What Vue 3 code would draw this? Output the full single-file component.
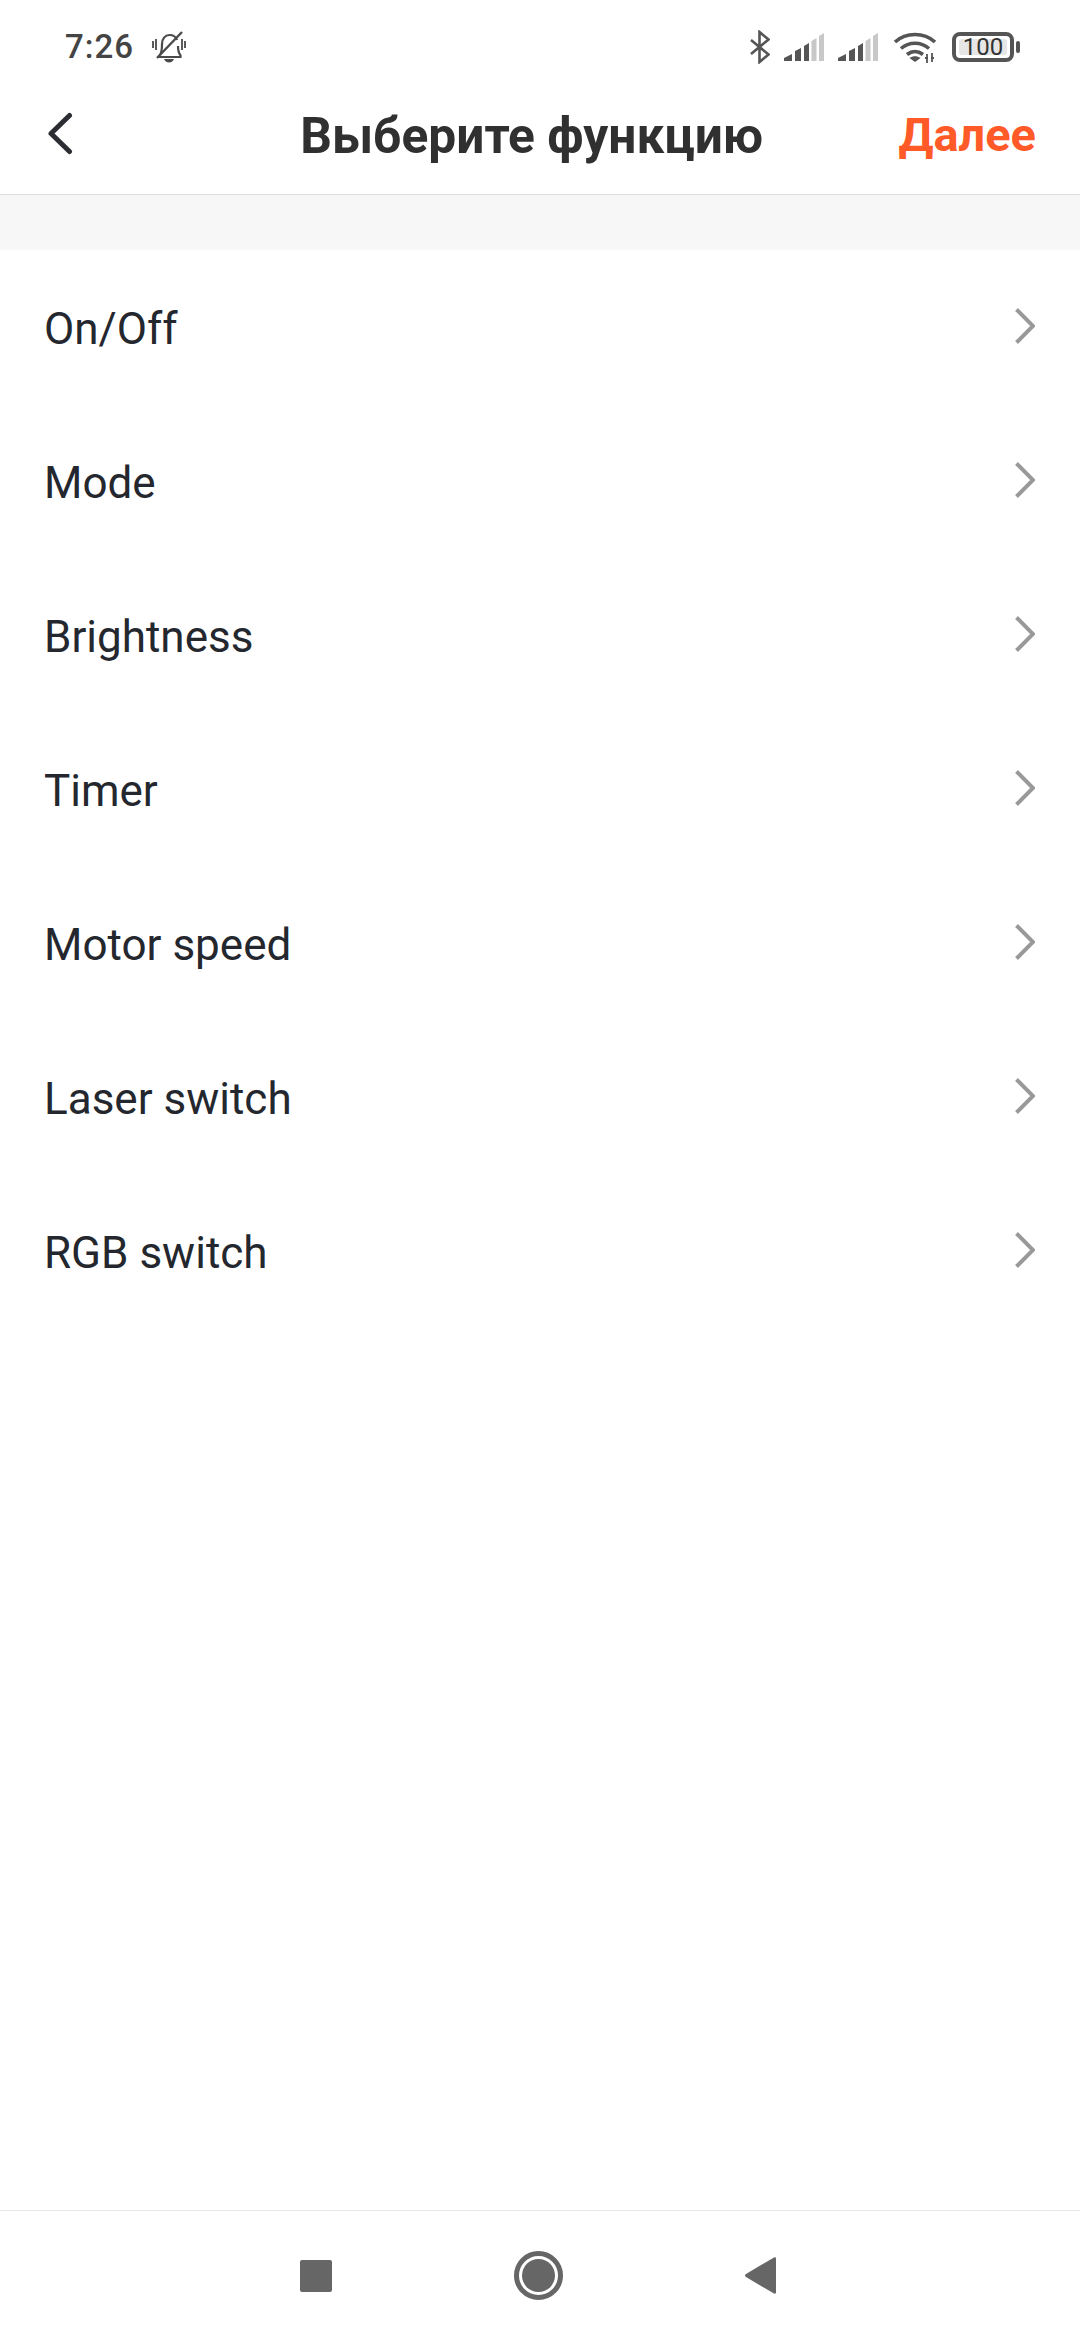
<template>
  <div class="page">
    <div class="status-bar">
      <div class="status-left">
        <span class="time">7:26</span>
        <svg class="bell" width="36" height="34" viewBox="0 0 36 34">
          <path d="M9 25c2-3 2-6 2-11 0-5 3-9 7.500-9 4 0 6.500 2 7.500 5M27 16c0 4 .5 7 2.500 9.500V27H8" fill="none" stroke="#4a4a4a" stroke-width="2.200" />
          <path d="M6 28 31 2" fill="none" stroke="#4a4a4a" stroke-width="2.400" />
          <path d="M13 29h10c-1 2.500-3 3.500-5 3.500s-4-1-5-3.500z" fill="#4a4a4a" />
          <path d="M2 11v7M5 9v11M31 9v11M34 11v7" fill="none" stroke="#4a4a4a" stroke-width="1.800" />
        </svg>
      </div>
      <div class="status-right">
        <svg class="bluetooth" width="22" height="34" viewBox="0 0 22 34">
          <path d="M3 10 20.500 24.500 11.500 32V2l9 7.500L3 24" fill="none" stroke="#555" stroke-width="2.600" />
        </svg>
        <svg v-for="n in 2" :key="n" class="signal" width="40" height="30" viewBox="0 0 40 30">
          <path d="M0 29v-3l8-4v7zM11 29V19l6-3v13zM20 29V14l5-3v18z" fill="#555" />
          <path d="M27.500 29V9l5-3v23zM35 29V4l5-3v28z" fill="#c8c8c8" />
        </svg>
        <svg class="wifi" width="44" height="32" viewBox="0 0 44 32">
          <path d="M2 11c11-10 29-10 40 0M8 17.500c8-7 20-7 28 0M14 23.500c5-4 11-4 16 0" fill="none" stroke="#555" stroke-width="3.600" />
          <path d="M16.500 27c3.500-2.500 7.500-2.500 11 0l-5.500 4z" fill="#555" />
          <path d="M34 23v9M39 22v9M32 27h3M38 27h3" fill="none" stroke="#555" stroke-width="1.800" />
        </svg>
        <div class="battery">
          <div class="battery-body"><span class="battery-level">100</span></div>
          <div class="battery-nub"></div>
        </div>
      </div>
    </div>

    <div class="header">
      <svg class="back" width="26" height="44" viewBox="0 0 26 44">
        <path d="M22.500 4.500 4 22.500l18.500 18" fill="none" stroke="#2b2d33" stroke-width="5" stroke-linecap="round" stroke-linejoin="round" />
      </svg>
      <div class="title">Выберите функцию</div>
      <div class="next">Далее</div>
    </div>

    <div class="band"></div>

    <div class="list">
      <div v-for="item in items" :key="item" class="row">
        <span class="label">{{ item }}</span>
        <svg class="chevron" width="22" height="38" viewBox="0 0 22 38">
          <path d="M3.500 2.500 20 19 3.500 35.500" fill="none" stroke="#999" stroke-width="4" />
        </svg>
      </div>
    </div>

    <div class="nav">
      <svg width="32" height="32" viewBox="0 0 32 32"><rect width="32" height="32" rx="2" fill="#666" /></svg>
      <svg width="49" height="49" viewBox="0 0 49 49">
        <circle cx="24.500" cy="24.500" r="22" fill="none" stroke="#666" stroke-width="5" />
        <circle cx="24.500" cy="24.500" r="16.500" fill="#666" />
      </svg>
      <svg width="31" height="37" viewBox="0 0 31 37"><path d="M29 .4c1-.5 2 0 2 1v34.200c0 1-1 1.500-2 1L1 20c-1.300-.8-1.300-2.200 0-3z" fill="#666" /></svg>
    </div>
  </div>
</template>

<script setup>
const items = [
  'On/Off',
  'Mode',
  'Brightness',
  'Timer',
  'Motor speed',
  'Laser switch',
  'RGB switch'
];
</script>

<style>
html,
body {
  margin: 0;
  background: #fff;
}
</style>

<style scoped>
.page {
  width: 1080px;
  height: 2340px;
  display: flex;
  flex-direction: column;
  background: #fff;
  font-family: Roboto, sans-serif;
}

.status-bar {
  height: 64px;
  padding: 29px 60px 0 65px;
  box-sizing: border-box;
  display: flex;
  justify-content: space-between;
  align-items: center;
  flex-shrink: 0;
}

.status-left,
.status-right {
  display: flex;
  align-items: center;
}

.time {
  font-size: 33px;
  font-weight: 500;
  color: #444;
  letter-spacing: 1px;
}

.bell {
  margin-left: 17px;
}

.status-right svg {
  flex-shrink: 0;
}

.signal {
  margin-left: 14px;
}

.wifi {
  margin-left: 15px;
}

.battery {
  display: flex;
  align-items: center;
  margin-left: 15px;
}

.battery-body {
  width: 62px;
  height: 30px;
  box-sizing: border-box;
  border: 4px solid #555;
  border-radius: 8px;
  padding: 3px;
  display: flex;
}

.battery-level {
  flex: 1;
  background: #e6e6e6;
  border-radius: 3px;
  font-size: 24px;
  line-height: 16px;
  text-align: center;
  color: #333;
}

.battery-nub {
  width: 4px;
  height: 12px;
  margin-left: 2px;
  background: #555;
  border-radius: 2px;
}

.header {
  height: 122px;
  padding: 8px 44px 0 47px;
  display: flex;
  align-items: center;
  border-bottom: 1px solid #dcdcdc;
  flex-shrink: 0;
}

.title {
  flex: 1;
  text-align: center;
  font-size: 49.700px;
  font-weight: 700;
  color: #303030;
  padding: 6px 0 0 92px;
}

.next {
  font-size: 47px;
  font-weight: 700;
  color: #ff5a28;
  padding-top: 3px;
}

.band {
  height: 55px;
  background: #f7f7f7;
  flex-shrink: 0;
}

.list {
  flex: 1;
}

.row {
  height: 154px;
  padding: 0 45px 0 44px;
  display: flex;
  align-items: center;
  justify-content: space-between;
  font-size: 44px;
  color: #24272e;
}

.label {
  padding-top: 4px;
}

.chevron {
  margin-bottom: 3px;
}

.nav {
  height: 129px;
  padding-left: 300px;
  display: flex;
  align-items: center;
  gap: 182px;
  border-top: 1px solid #e6e6e6;
  flex-shrink: 0;
}
</style>
